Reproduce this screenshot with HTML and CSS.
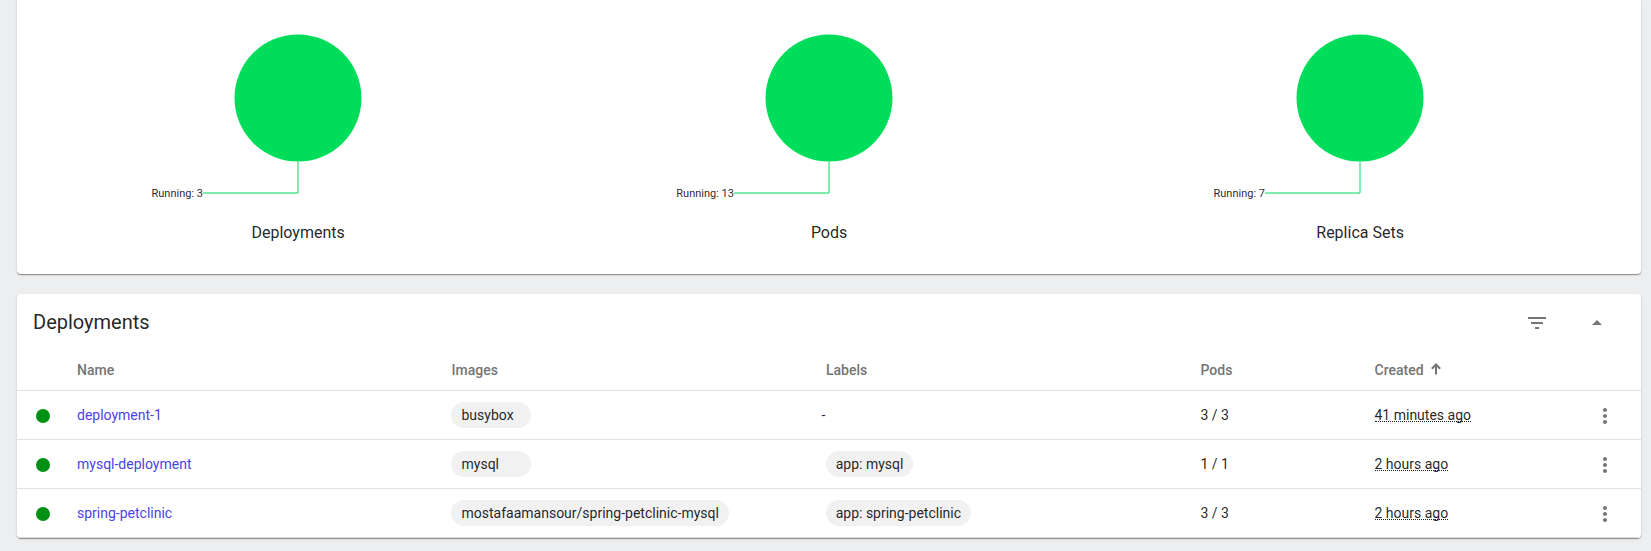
FILE: index.html
```html
<!DOCTYPE html>
<html lang="en">
<head>
<meta charset="utf-8">
<title>Workloads</title>
<link rel="stylesheet" href="styles.css">
</head>
<body>
<svg class="defs" aria-hidden="true">
  <symbol id="more" viewBox="0 0 24 24"><path d="M12 8c1.1 0 2-.9 2-2s-.9-2-2-2-2 .9-2 2 .9 2 2 2zm0 2c-1.1 0-2 .9-2 2s.9 2 2 2 2-.9 2-2-.9-2-2-2zm0 6c-1.1 0-2 .9-2 2s.9 2 2 2 2-.9 2-2-.9-2-2-2z"/></symbol>
</svg>
<main class="page">
  <section class="card charts">
    <figure class="chart">
      <svg class="pie" viewBox="0 0 310 213"><circle cx="155" cy="98" r="63.5"/><polyline points="155,161.5 155,193 60,193"/><text x="60" y="197">Running: 3</text></svg>
      <figcaption>Deployments</figcaption>
    </figure>
    <figure class="chart">
      <svg class="pie" viewBox="0 0 310 213"><circle cx="155" cy="98" r="63.5"/><polyline points="155,161.5 155,193 60,193"/><text x="60" y="197">Running: 13</text></svg>
      <figcaption>Pods</figcaption>
    </figure>
    <figure class="chart">
      <svg class="pie" viewBox="0 0 310 213"><circle cx="155" cy="98" r="63.5"/><polyline points="155,161.5 155,193 60,193"/><text x="60" y="197">Running: 7</text></svg>
      <figcaption>Replica Sets</figcaption>
    </figure>
  </section>

  <section class="card list">
    <header class="list-header">
      <h2>Deployments</h2>
      <svg class="icon filter" viewBox="0 0 24 24"><path d="M10 18h4v-2h-4v2zM3 6v2h18V6H3zm3 7h12v-2H6v2z"/></svg>
      <svg class="icon caret" viewBox="0 0 24 24"><path d="M7 14l5-5 5 5z"/></svg>
    </header>
    <div class="row head">
      <span></span><span>Name</span><span class="images">Images</span><span>Labels</span><span>Pods</span>
      <span class="sorted">Created<svg class="arrow" viewBox="0 0 10 12"><path d="M5 11.5V1.5M.8 5.7L5 1.5l4.2 4.2"/></svg></span><span></span>
    </div>
    <div class="row">
      <i class="dot"></i><a>deployment-1</a><div><span class="chip image">busybox</span></div><span class="empty">-</span><span>3 / 3</span><span><span class="time">41 minutes ago</span></span><svg class="icon menu"><use href="#more"/></svg>
    </div>
    <div class="row">
      <i class="dot"></i><a>mysql-deployment</a><div><span class="chip image">mysql</span></div><div><span class="chip">app: mysql</span></div><span>1 / 1</span><span><span class="time">2 hours ago</span></span><svg class="icon menu"><use href="#more"/></svg>
    </div>
    <div class="row">
      <i class="dot"></i><a>spring-petclinic</a><div><span class="chip image">mostafaamansour/spring-petclinic-mysql</span></div><div><span class="chip">app: spring-petclinic</span></div><span>3 / 3</span><span><span class="time">2 hours ago</span></span><svg class="icon menu"><use href="#more"/></svg>
    </div>
  </section>
</main>
</body>
</html>
```
FILE: styles.css
```css
* { box-sizing: border-box; }
body {
  margin: 0;
  height: 551px;
  overflow: hidden;
  background: #edeef0;
  color: rgba(0, 0, 0, .87);
  font: 14px/20px Roboto, sans-serif;
}
.defs { display: none; }
.page {
  display: flex;
  flex-direction: column;
  gap: 20px;
  padding: 0 10px 0 17px;
}
.card {
  background: #fff;
  border-radius: 4px;
  box-shadow: 0 1px 0 rgba(0, 0, 0, .22), 0 1px 1px rgba(0, 0, 0, .16), 0 1px 3px rgba(0, 0, 0, .12);
}
.charts {
  display: grid;
  grid-template-columns: repeat(3, 531px);
  height: 274px;
  padding-left: 15.4px;
  border-radius: 0 0 4px 4px;
}
.chart {
  display: flex;
  flex-direction: column;
  align-items: center;
  margin: 0;
}
.pie { width: 310px; height: 213px; }
.pie circle { fill: #00dd5b; }
.pie polyline { fill: none; stroke: #00dd5b; }
.pie text { font-size: 11px; text-anchor: end; fill: rgba(0, 0, 0, .87); }
figcaption { padding: 8px 0 0 .4px; font-size: 16px; line-height: 24px; }
.list-header {
  display: flex;
  align-items: center;
  height: 56px;
  padding: 0 32px 0 16px;
}
h2 {
  flex: 1;
  margin: 0;
  font-size: 20px;
  font-weight: 400;
  line-height: 28px;
}
.icon { width: 24px; height: 24px; fill: #757575; }
.filter { margin: 2px 36px 0 0; }
.caret { margin-top: 2px; }
.row {
  display: grid;
  grid-template-columns: 60px 374px 375px 374.5px 174px 218.5px 1fr;
  align-items: center;
  height: 49px;
  border-bottom: 1px solid #dfdfdf;
}
.head {
  height: 41px;
  padding-bottom: 1px;
  color: #757575;
  font-weight: 500;
}
.images { padding-left: .5px; }
.sorted { display: flex; align-items: center; }
.arrow {
  width: 10px;
  height: 12px;
  margin: 0 0 1px 7.5px;
  fill: none;
  stroke: #757575;
  stroke-width: 2;
}
.dot {
  width: 14px;
  height: 14px;
  margin: 2px 0 0 19px;
  border-radius: 50%;
  background: #009013;
}
a { color: #4c43e5; }
.chip {
  display: block;
  width: fit-content;
  padding: 0 9.7px;
  border-radius: 13px;
  background: #f1f1f1;
  line-height: 26px;
}
.image { min-width: 80px; padding: 0 10.5px; }
.empty { margin-left: -4.5px; }
.time {
  display: inline-block;
  height: 17px;
  border-bottom: 1px dotted #212121;
}
.menu { margin-top: 2px; }
```
